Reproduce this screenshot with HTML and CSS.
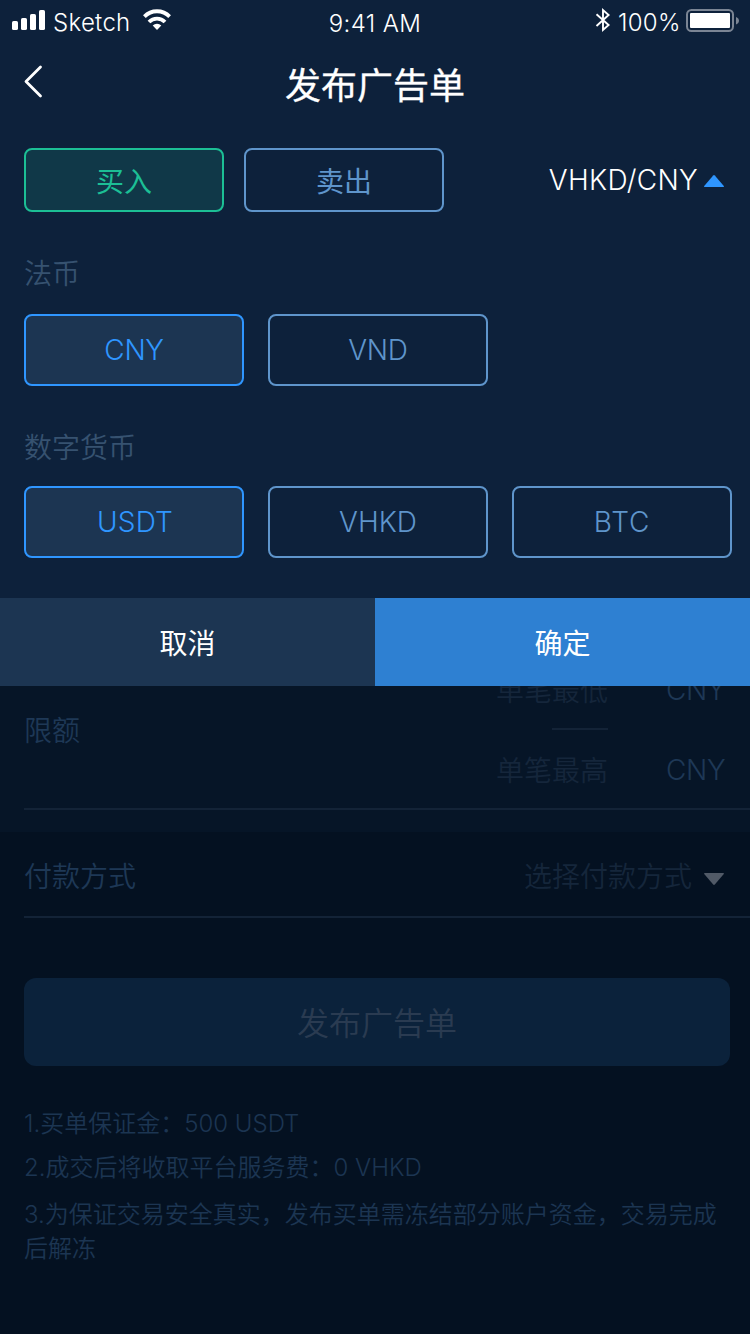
FILE: index.html
```html
<!DOCTYPE html>
<html lang="zh-CN">
<head>
<meta charset="utf-8">
<title>发布广告单</title>
<link rel="stylesheet" href="styles.css">
</head>
<body>
<div class="screen">
  <header class="status">
    <div class="status-left">
      <svg class="signal" width="34" height="20" viewBox="0 0 34 20" fill="#fff">
        <rect x="0" y="11" width="6" height="9" rx="1.6"/><rect x="9" y="8" width="6" height="12" rx="1.6"/><rect x="18" y="4" width="6" height="16" rx="1.6"/><rect x="27" y="0" width="6" height="20" rx="1.6"/>
      </svg>
      <span class="carrier">Sketch</span>
      <svg class="wifi" width="30" height="22" viewBox="0 0 30 22" fill="none" stroke="#fff">
        <path stroke-width="3.8" d="M2.4 7.6a17.5 17.5 0 0 1 25.2 0"/>
        <path stroke-width="3.8" d="M7 13a11.2 11.2 0 0 1 16 0"/>
        <path fill="#fff" stroke="none" d="M15 21l-4.3-4.4a6.2 6.2 0 0 1 8.6 0z"/>
      </svg>
    </div>
    <span class="time">9:41 AM</span>
    <div class="status-right">
      <svg class="bluetooth" width="16" height="26" viewBox="0 0 16 26" fill="none" stroke="#fff" stroke-width="1.9">
        <path d="M1.5 7.2L13.6 18 8 23V3l5.6 5L1.5 19"/>
      </svg>
      <span class="percent">100%</span>
      <svg class="battery" width="54" height="24" viewBox="0 0 54 24">
        <rect x="1" y="1" width="46" height="21" rx="4.5" fill="none" stroke="#7b8594" stroke-width="2"/>
        <rect x="4" y="4" width="40" height="15" rx="1" fill="#fff"/>
        <path d="M50 8c4 1.5 4 6 0 7.500z" fill="#7b8594"/>
      </svg>
    </div>
  </header>

  <nav class="nav">
    <svg class="back" width="20" height="34" viewBox="0 0 20 34" fill="none" stroke="#fff" stroke-width="2.8" stroke-linecap="round" stroke-linejoin="round"><path d="M16.500 2L2 16.500l14.500 14.500"/></svg>
    <h1 class="title">发布广告单</h1>
  </nav>

  <main class="panel">
    <div class="side-row">
      <button class="side side-buy">买入</button>
      <button class="side">卖出</button>
      <div class="pair"><span class="pair-name">VHKD/CNY</span><svg class="pair-arrow" width="20" height="12" viewBox="0 0 20 12" fill="#2f96ff"><path d="M9.200.5q.8-.8 1.600 0l9 10.500q.4 1-.6 1H.8q-1 0-.6-1z"/></svg></div>
    </div>
    <h2 class="group-title">法币</h2>
    <div class="chips">
      <button class="chip chip-on chip-cny">CNY</button>
      <button class="chip chip-cny">VND</button>
    </div>
    <h2 class="group-title group-title-coin">数字货币</h2>
    <div class="chips">
      <button class="chip chip-on chip-usdt">USDT</button>
      <button class="chip">VHKD</button>
      <button class="chip chip-btc">BTC</button>
    </div>
    <div class="actions">
      <button class="action">取消</button>
      <button class="action action-ok">确定</button>
    </div>
  </main>

  <section class="limits">
    <div class="limits-body">
      <span class="label limits-label">限额</span>
      <div class="limits-fields">
        <div class="field"><span class="hint cjk">单笔最低</span><span class="unit">CNY</span></div>
        <div class="dash"></div>
        <div class="field"><span class="hint cjk">单笔最高</span><span class="unit">CNY</span></div>
      </div>
    </div>
  </section>

  <section class="rest">
    <div class="pay">
      <span class="label">付款方式</span>
      <span class="hint pay-hint">选择付款方式</span>
      <svg class="pay-arrow" width="20" height="12" viewBox="0 0 20 12" fill="#515a67"><path d="M9.200 11.500q.8.8 1.600 0l9-10.500q.4-1-.6-1H.8q-1 0-.6 1z"/></svg>
    </div>
    <button class="publish">发布广告单</button>
    <div class="notes">
      <p class="note">1.买单保证金：500 USDT</p>
      <p class="note">2.成交后将收取平台服务费：0 VHKD</p>
      <p class="note note-long">3.为保证交易安全真实，发布买单需冻结部分账户资金，交易完成后解冻</p>
    </div>
  </section>
</div>
</body>
</html>
```
FILE: styles.css
```css
* { box-sizing: border-box; margin: 0; padding: 0; }
body { background: #041121; font-family: Inter, "Noto Sans CJK SC", sans-serif; }
button { font: inherit; letter-spacing: inherit; background: none; border: 0; }
svg { display: block; flex: none; }

.screen { width: 750px; height: 1334px; overflow: hidden; display: flex; flex-direction: column; font-weight: 350; font-size: 28px; line-height: 40px; white-space: nowrap; }

.status { height: 40px; flex: none; display: grid; grid-template-columns: 1fr auto 1fr; background: #0d213b; color: #fff; font-size: 24px; line-height: 46px; }
.status-left { display: flex; align-items: flex-start; padding-left: 12px; }
.signal { margin-top: 10px; }
.carrier { margin-left: 7px; width: 89px; letter-spacing: .3px; }
.wifi { margin-top: 9px; }
.time { line-height: 48px; letter-spacing: .4px; }
.status-right { display: flex; align-items: flex-start; justify-content: flex-end; padding-right: 10px; }
.bluetooth { margin-top: 7px; }
.percent { width: 62px; margin: 0 6px 0 7px; letter-spacing: .3px; }
.battery { margin-top: 9px; }

.nav { height: 88px; flex: none; display: grid; grid-template-columns: 1fr auto 1fr; align-items: center; padding: 0 24px; background: #0d213b; color: #fff; }
.back { margin-top: -4px; }
.title { padding-top: 3px; font-size: 36px; font-weight: 400; line-height: 50px; -webkit-text-stroke: .3px; }

.panel { height: 558px; flex: none; background: #0d213b; }
.side-row { display: flex; align-items: center; padding: 20px 26px 0 24px; gap: 20px; }
.side { width: 200px; height: 64px; padding-top: 3px; border: 2px solid #5f95cb; border-radius: 8px; color: #5f95cb; font-weight: 400; }
.side-buy { color: #1cbf95; border-color: #1cbf95; background: #103848; }
.pair { margin-left: auto; display: flex; align-items: center; gap: 6px; color: #fff; }
.pair-name { font-weight: 300; letter-spacing: .3px; }
.pair-arrow { margin-top: 2px; }
.group-title { padding: 2px 0 0 24px; margin: 40px 0 20px; font-size: 28px; font-weight: 350; color: #365270; }
.group-title-coin { margin-bottom: 18px; }
.chips { display: flex; gap: 24px; padding-left: 24px; }
.chip { width: 220px; height: 72px; border: 2px solid #5f95cb; border-radius: 8px; color: #5f95cb; font-weight: 300; }
.chip-on { color: #2f96ff; border-color: #2f96ff; background: #1c3552; }
.chip-cny { letter-spacing: -.3px; }
.chip-usdt { padding-left: 2px; letter-spacing: .2px; }
.chip-btc { letter-spacing: .8px; }
.actions { display: grid; grid-template-columns: 1fr 1fr; height: 88px; margin-top: 40px; }
.action { padding-top: 3px; background: #1c3552; color: #fff; font-weight: 400; }
.action-ok { background: #2e80d2; }

.label { color: #1e3856; }
.hint { color: #15263b; }
.limits { height: 146px; flex: none; padding: 0 0 22px 24px; background: #061527; overflow: hidden; }
.limits-body { height: 124px; display: flex; justify-content: space-between; align-items: flex-end; border-bottom: 2px solid #132337; overflow: hidden; }
.limits-label { padding-bottom: 57px; }
.limits-fields { padding: 0 24px 18px 0; }
.field { display: flex; justify-content: flex-end; height: 40px; }
.cjk { padding-top: 1px; }
.unit { width: 60px; margin-left: 58px; color: #1e3856; letter-spacing: -.3px; }
.dash { width: 56px; height: 2px; margin: 18px 0 20px 56px; background: #132337; }

.rest { flex: 1; background: #041121; }
.pay { height: 86px; margin-left: 24px; padding: 8px 26px 0 0; display: flex; align-items: center; border-bottom: 2px solid #132337; }
.pay .label, .pay-hint { margin-top: -2px; }
.pay-hint { margin-left: auto; margin-right: 12px; }
.pay-arrow { margin-top: 2px; }
.publish { display: block; width: 706px; height: 88px; margin: 60px 0 0 24px; padding-top: 3px; border-radius: 12px; background: #0b223b; color: #2a3b51; font-size: 32px; }
.notes { padding: 36px 24px 0; font-size: 24px; color: #1c3552; white-space: normal; }
.note { line-height: 44px; }
.note-long { line-height: 34px; margin-top: 8px; }
```
